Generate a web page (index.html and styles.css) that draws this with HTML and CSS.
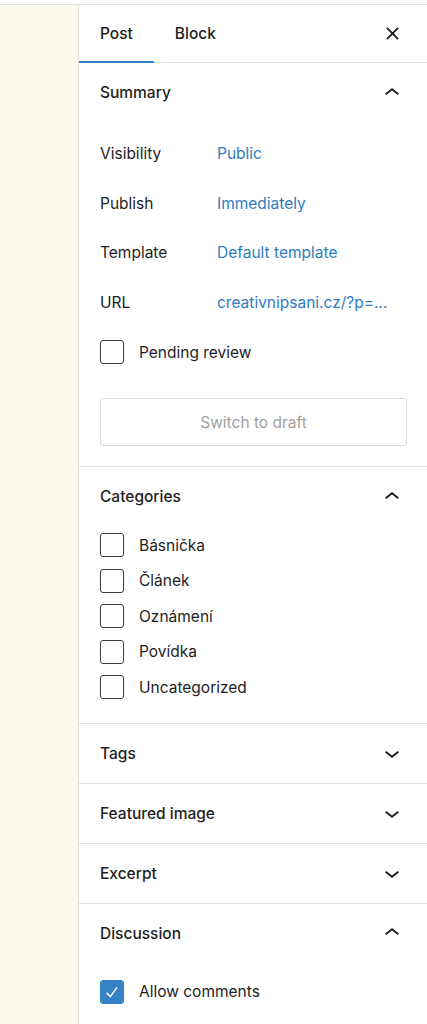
FILE: index.html
```html
<!DOCTYPE html>
<html lang="cs">
<head>
<meta charset="utf-8">
<title>Post settings</title>
<link rel="stylesheet" href="styles.css">
</head>
<body>
<div class="topstrip"></div>
<div class="layout">
  <div class="canvas"></div>
  <aside class="sidebar">
    <div class="tabs">
      <div class="tab active">Post</div>
      <div class="tab">Block</div>
      <div class="spacer"></div>
      <svg class="close" viewBox="0 0 14 14"><path d="M1 1L13 13M13 1L1 13"/></svg>
    </div>

    <section class="panel">
      <div class="panel-head">
        <span>Summary</span>
        <svg class="icon" viewBox="0 0 24 24"><path d="M6.5 12.4L12 8l5.5 4.4-.9 1.2L12 10l-4.6 3.6-1-1.2z"/></svg>
      </div>
      <div class="summary-body">
        <div class="row"><span class="label">Visibility</span><span class="link">Public</span></div>
        <div class="row"><span class="label">Publish</span><span class="link">Immediately</span></div>
        <div class="row"><span class="label">Template</span><span class="link">Default template</span></div>
        <div class="row"><span class="label">URL</span><span class="link">creativnipsani.cz/?p=…</span></div>
        <div class="check-row pending"><span class="box"></span><span>Pending review</span></div>
        <div class="button">Switch to draft</div>
      </div>
    </section>

    <section class="panel">
      <div class="panel-head">
        <span>Categories</span>
        <svg class="icon" viewBox="0 0 24 24"><path d="M6.5 12.4L12 8l5.5 4.4-.9 1.2L12 10l-4.6 3.6-1-1.2z"/></svg>
      </div>
      <div class="cat-body">
        <div class="check-row cat"><span class="box"></span><span>Básnička</span></div>
        <div class="check-row cat"><span class="box"></span><span>Článek</span></div>
        <div class="check-row cat"><span class="box"></span><span>Oznámení</span></div>
        <div class="check-row cat"><span class="box"></span><span>Povídka</span></div>
        <div class="check-row cat"><span class="box"></span><span>Uncategorized</span></div>
      </div>
    </section>

    <section class="panel">
      <div class="panel-head">
        <span>Tags</span>
        <svg class="icon" viewBox="0 0 24 24"><path d="M17.5 11.6L12 16l-5.5-4.4.9-1.2L12 14l4.6-3.6 1 1.2z"/></svg>
      </div>
    </section>
    <section class="panel">
      <div class="panel-head">
        <span>Featured image</span>
        <svg class="icon" viewBox="0 0 24 24"><path d="M17.5 11.6L12 16l-5.5-4.4.9-1.2L12 14l4.6-3.6 1 1.2z"/></svg>
      </div>
    </section>
    <section class="panel">
      <div class="panel-head">
        <span>Excerpt</span>
        <svg class="icon" viewBox="0 0 24 24"><path d="M17.5 11.6L12 16l-5.5-4.4.9-1.2L12 14l4.6-3.6 1 1.2z"/></svg>
      </div>
    </section>
    <section class="panel last">
      <div class="panel-head">
        <span>Discussion</span>
        <svg class="icon" viewBox="0 0 24 24"><path d="M6.5 12.4L12 8l5.5 4.4-.9 1.2L12 10l-4.6 3.6-1-1.2z"/></svg>
      </div>
      <div class="disc-body">
        <div class="check-row cat"><span class="box checked"><svg viewBox="0 0 24 24"><path d="M18 6.5L10 17.5L5.5 13"/></svg></span><span>Allow comments</span></div>
      </div>
    </section>
  </aside>
</div>
</body>
</html>
```

FILE: styles.css
```css
* { box-sizing: border-box; }
html, body {
  margin: 0;
  padding: 0;
  background: #fff;
  font-family: Inter, "Noto Sans", Roboto, sans-serif;
  font-size: 15.5px;
  color: #1e1e1e;
}
.topstrip {
  height: 5px;
  background: #fff;
  border-bottom: 1px solid #e0e0e0;
}
.layout {
  display: flex;
  min-height: 1019px;
}
.canvas {
  width: 78px;
  flex: 0 0 78px;
  background: #fbf8ec;
}
.sidebar {
  flex: 1;
  border-left: 1px solid #e0e0e0;
  background: #fff;
}
.tabs {
  display: flex;
  align-items: center;
  height: 58px;
  border-bottom: 1px solid #e0e0e0;
  padding-right: 28px;
}
.tab {
  height: 100%;
  display: flex;
  align-items: center;
  padding: 0 21px;
  font-weight: 500;
  position: relative;
}
.tab.active::after {
  content: "";
  position: absolute;
  left: 0; right: 0; bottom: -1px;
  height: 2px;
  background: #3582c4;
}
.spacer { flex: 1; }
.close {
  width: 13px;
  height: 13px;
  flex: 0 0 13px;
  stroke: #1e1e1e;
  stroke-width: 2;
  fill: none;
}
.icon {
  width: 30px;
  height: 30px;
  fill: #1e1e1e;
  flex: 0 0 30px;
}
.panel {
  border-bottom: 1px solid #e0e0e0;
}
.panel.last { border-bottom: none; }
.panel-head {
  height: 59px;
  display: flex;
  align-items: center;
  justify-content: space-between;
  padding: 0 20px 0 21px;
  font-weight: 500;
}
.summary-body {
  padding: 7px 20px 20px 21px;
}
.row {
  height: 49.6px;
  display: flex;
  align-items: center;
}
.label { width: 117px; }
.link { color: #2f7cc0; }
.check-row {
  display: flex;
  align-items: center;
  gap: 15px;
}
.check-row.pending { height: 50px; }
.check-row.cat { height: 35.5px; }
.box {
  width: 24px;
  height: 24px;
  border: 1.5px solid #3c3c3c;
  border-radius: 3px;
  flex: 0 0 24px;
  display: flex;
  align-items: center;
  justify-content: center;
}
.box.checked {
  background: #3582c4;
  border-color: #3582c4;
}
.box.checked svg {
  width: 20px;
  height: 20px;
  fill: none;
  stroke: #fff;
  stroke-width: 1.8;
}
.button {
  margin-top: 21px;
  height: 48px;
  border: 1px solid #dcdcde;
  border-radius: 3px;
  display: flex;
  align-items: center;
  justify-content: center;
  color: #a0a0a0;
}
.cat-body {
  padding: 1px 20px 18px 21px;
}
.disc-body {
  padding: 11px 20px 20px 21px;
}
```
